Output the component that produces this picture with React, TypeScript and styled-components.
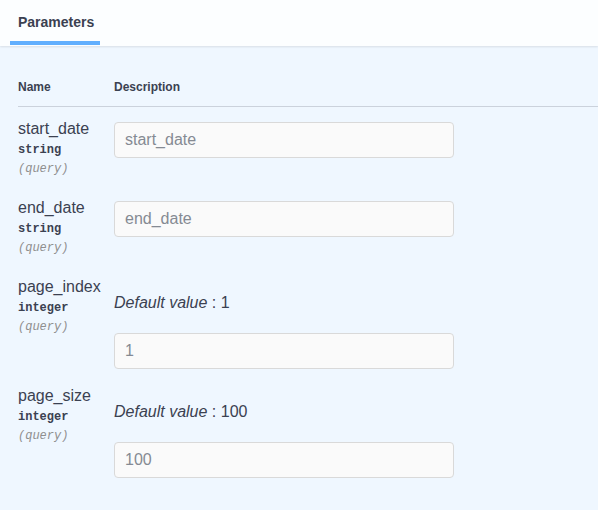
import React from "react";
import styled, { createGlobalStyle } from "styled-components";

const GlobalStyle = createGlobalStyle`
	html, body {
		margin: 0;
		padding: 0;
		background: #eff7ff;
	}
	body {
		font-family: "Liberation Sans", Arial, sans-serif;
		color: #3b4151;
	}
`;

const Wrapper = styled.div`
	width: 598px;
	min-height: 510px;
	background-color: #eff7ff;
`;
const TabHeader = styled.div`
	display: flex;
	height: 46px;
	padding-left: 10px;
	box-sizing: border-box;
	background: rgba(255, 255, 255, 0.8);
	box-shadow: 0 1px 2px rgba(0, 0, 0, 0.1);
`;
const Tab = styled.div`
	padding: 12px 6px 9px 8px;
	height: 20px;
	line-height: 20px;
	font-size: 14px;
	font-weight: 700;
	border-bottom: 4px solid #61affe;
`;
const Table = styled.div`
	padding-left: 18px;
`;
const HeadRow = styled.div`
	display: grid;
	grid-template-columns: 96px 1fr;
	padding: 33px 0 11px;
	border-bottom: 1px solid rgba(59, 65, 81, 0.2);
	font-size: 12px;
	line-height: 16px;
	font-weight: 700;
`;
const Row = styled.div`
	display: grid;
	grid-template-columns: 96px 1fr;
	padding: 12px 0 5px;
`;
const NameCol = styled.div`
	display: flex;
	flex-direction: column;
	padding-bottom: 4px;
`;
const ParamName = styled.div`
	font-size: 16px;
	line-height: 20px;
`;
const ParamType = styled.div`
	margin-top: 3px;
	font-family: "Liberation Mono", "DejaVu Sans Mono", monospace;
	font-size: 12px;
	line-height: 16px;
	font-weight: 700;
`;
const ParamIn = styled.div`
	margin-top: 3px;
	font-family: "Liberation Mono", "DejaVu Sans Mono", monospace;
	font-size: 12px;
	line-height: 16px;
	font-style: italic;
	color: #8f8f8f;
`;
const DescCol = styled.div`
	display: flex;
	flex-direction: column;
	align-items: flex-start;
`;
const DefaultNote = styled.p`
	margin: 16px 0 17px;
	font-size: 16px;
	line-height: 20px;
	i {
		font-style: italic;
	}
`;
const Input = styled.input`
	margin-top: 3px;
	width: 340px;
	height: 36px;
	box-sizing: border-box;
	padding: 0 10px;
	background: #fafafa;
	border: 1px solid #d9d9d9;
	border-radius: 4px;
	font-family: "Liberation Sans", Arial, sans-serif;
	font-size: 16px;
	outline: none;
	&::placeholder {
		color: #858a93;
	}
`;

interface IParam {
	name: string;
	type: string;
	defaultValue?: string;
}

const params: IParam[] = [
	{ name: "start_date", type: "string" },
	{ name: "end_date", type: "string" },
	{ name: "page_index", type: "integer", defaultValue: "1" },
	{ name: "page_size", type: "integer", defaultValue: "100" },
];

function App() {
	return (
		<Wrapper>
			<GlobalStyle />
			<TabHeader>
				<Tab>Parameters</Tab>
			</TabHeader>
			<Table>
				<HeadRow>
					<div>Name</div>
					<div>Description</div>
				</HeadRow>
				{params.map((p) => (
					<Row key={p.name}>
						<NameCol>
							<ParamName>{p.name}</ParamName>
							<ParamType>{p.type}</ParamType>
							<ParamIn>(query)</ParamIn>
						</NameCol>
						<DescCol>
							{p.defaultValue && (
								<DefaultNote>
									<i>Default value</i> : {p.defaultValue}
								</DefaultNote>
							)}
							<Input placeholder={p.defaultValue || p.name} />
						</DescCol>
					</Row>
				))}
			</Table>
		</Wrapper>
	);
}

export default App;
